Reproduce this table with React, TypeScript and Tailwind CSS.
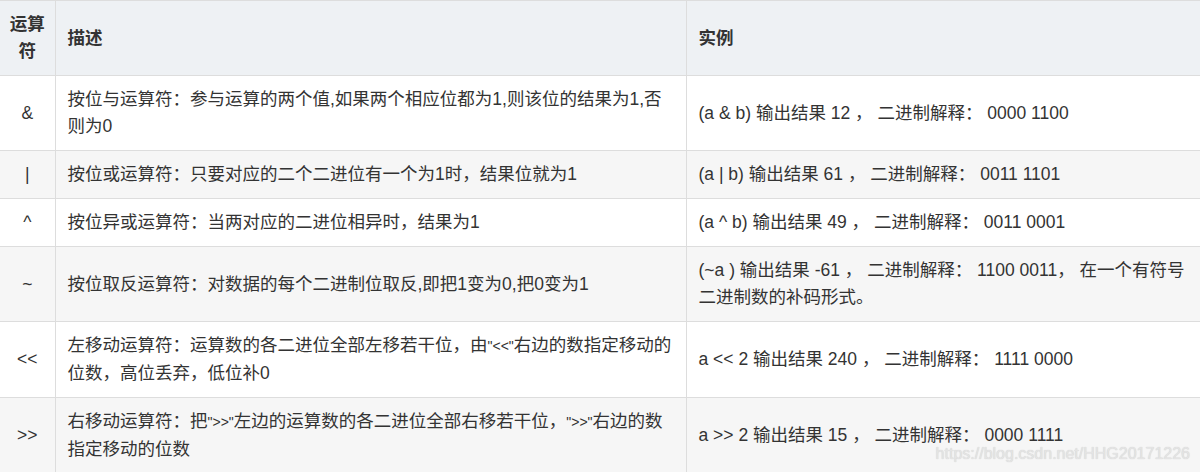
import type { ReactNode } from 'react';

// the reference renders the quoted operators in a much narrower font
const Q = ({ children }: { children: ReactNode }) => <span className="text-[14px]">{children}</span>;

const rows: { op: string; desc: ReactNode; example: string }[] = [
  {
    op: '&',
    desc: '按位与运算符：参与运算的两个值,如果两个相应位都为1,则该位的结果为1,否则为0',
    example: '(a & b) 输出结果 12 ， 二进制解释： 0000 1100',
  },
  {
    op: '|',
    desc: '按位或运算符：只要对应的二个二进位有一个为1时，结果位就为1',
    example: '(a | b) 输出结果 61 ， 二进制解释： 0011 1101',
  },
  {
    op: '^',
    desc: '按位异或运算符：当两对应的二进位相异时，结果为1',
    example: '(a ^ b) 输出结果 49 ， 二进制解释： 0011 0001',
  },
  {
    op: '~',
    desc: '按位取反运算符：对数据的每个二进制位取反,即把1变为0,把0变为1',
    example: '(~a ) 输出结果 -61 ， 二进制解释： 1100 0011， 在一个有符号二进制数的补码形式。',
  },
  {
    op: '<<',
    desc: (
      <>
        左移动运算符：运算数的各二进位全部左移若干位，由<Q>"&lt;&lt;"</Q>右边的数指定移动的位数，高位丢弃，低位补0
      </>
    ),
    example: 'a << 2 输出结果 240 ， 二进制解释： 1111 0000',
  },
  {
    op: '>>',
    desc: (
      <>
        右移动运算符：把<Q>"&gt;&gt;"</Q>左边的运算数的各二进位全部右移若干位，<Q>"&gt;&gt;"</Q>右边的数指定移动的位数
      </>
    ),
    example: 'a >> 2 输出结果 15 ， 二进制解释： 0000 1111',
  },
];

export default function App() {
  return (
    <div
      className="relative w-[1200px] h-[472px] overflow-hidden bg-white text-[#333] text-[17.5px] leading-[27px]"
      style={{ fontFamily: '"Liberation Sans", Arial, "Noto Sans CJK SC", sans-serif' }}
    >
      <table className="w-[1200px] table-fixed border-collapse border-t border-b border-[#ddd]">
        <colgroup>
          <col className="w-[55px]" />
          <col className="w-[631px]" />
          <col className="w-[514px]" />
        </colgroup>
        <thead>
          <tr className="bg-[#eef1f4]">
            <th className="border-r border-b border-[#ddd] px-2 py-[10px] text-center align-middle font-bold">运算符</th>
            <th className="border-r border-b border-[#ddd] px-3 py-[10px] text-left align-middle font-bold">描述</th>
            <th className="border-b border-[#ddd] px-3 py-[10px] text-left align-middle font-bold">实例</th>
          </tr>
        </thead>
        <tbody>
          {rows.map((r, i) => (
            <tr key={r.op} className={i % 2 === 1 ? 'bg-[#f6f6f6]' : 'bg-white'}>
              <td className="border-r border-b border-[#ddd] px-2 py-[10px] text-center align-middle">{r.op}</td>
              <td className="border-r border-b border-[#ddd] px-3 py-[10px] align-middle">{r.desc}</td>
              <td className="border-b border-[#ddd] px-3 py-[10px] align-middle">{r.example}</td>
            </tr>
          ))}
        </tbody>
      </table>
      {/* watermark */}
      <div className="absolute right-[10px] bottom-[5px] text-[16px] text-[#e4e4e4] [text-shadow:0_0_1px_#c8c8c8]">
        https://blog.csdn.net/HHG20171226
      </div>
    </div>
  );
}
